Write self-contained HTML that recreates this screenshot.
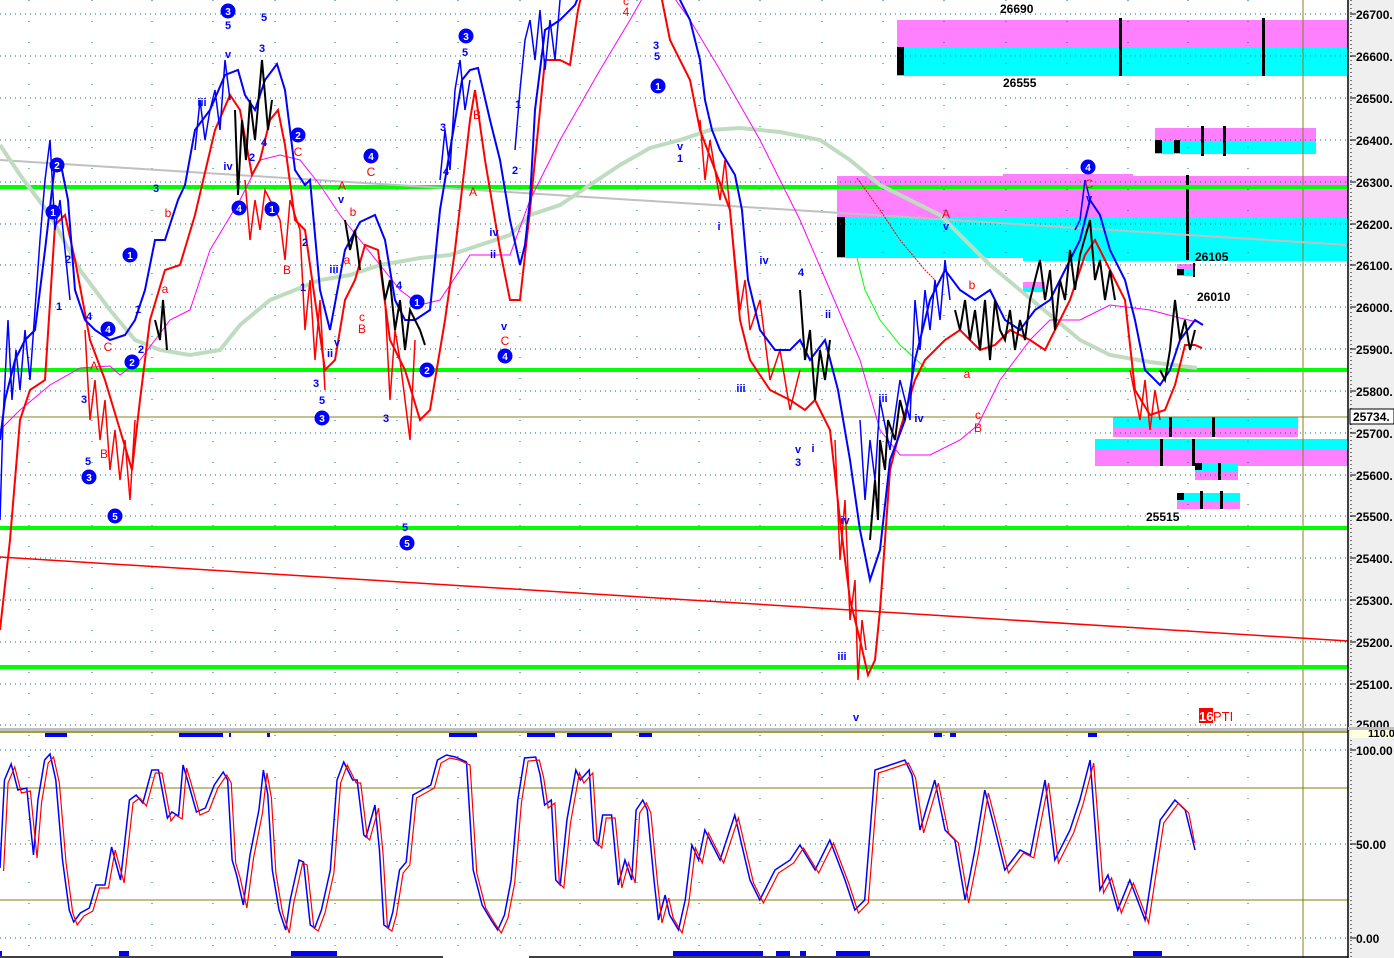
<!DOCTYPE html>
<html><head><meta charset="utf-8"><style>
html,body{margin:0;padding:0;background:#fff;width:1394px;height:958px;overflow:hidden}
svg{display:block}
text{font-family:"Liberation Sans",sans-serif}
</style></head><body>
<svg width="1394" height="958" viewBox="0 0 1394 958" xmlns="http://www.w3.org/2000/svg">
<rect x="0" y="0" width="1394" height="958" fill="#fff"/>
<rect x="1349" y="0" width="45" height="958" fill="#efefef"/>
<!-- boxes -->
<rect x="897" y="20" width="451" height="27" fill="#ff80ff"/><rect x="897" y="47" width="451" height="29" fill="#00ffff"/>
<rect x="897" y="47" width="7" height="28" fill="#000"/>
<rect x="1119" y="18" width="3" height="58" fill="#000"/><rect x="1262" y="18" width="3" height="58" fill="#000"/>
<rect x="1155" y="128" width="161" height="14" fill="#ff80ff"/><rect x="1155" y="142" width="161" height="12" fill="#00ffff"/>
<rect x="1155" y="140" width="7" height="13" fill="#000"/><rect x="1174" y="140" width="6" height="13" fill="#000"/>
<rect x="1201" y="126" width="3" height="30" fill="#000"/><rect x="1223" y="126" width="3" height="30" fill="#000"/>
<rect x="1003" y="174" width="130" height="4" fill="#ff80ff"/>
<rect x="837" y="176" width="511" height="41" fill="#ff80ff"/><rect x="837" y="217" width="511" height="41" fill="#00ffff"/>
<rect x="1023" y="255" width="325" height="6" fill="#00ffff"/>
<rect x="837" y="217" width="8" height="40" fill="#000"/>
<rect x="1186" y="175" width="3" height="85" fill="#000"/>
<rect x="1177" y="264" width="18" height="6" fill="#ff80ff"/><rect x="1177" y="270" width="18" height="6" fill="#00ffff"/><rect x="1177" y="269" width="7" height="6" fill="#000"/><rect x="1193" y="263" width="2" height="14" fill="#000"/>
<rect x="1023" y="282" width="22" height="5" fill="#ff80ff"/><rect x="1023" y="287" width="22" height="5" fill="#00ffff"/>
<rect x="1113" y="417" width="185" height="10" fill="#00ffff"/><rect x="1113" y="427" width="185" height="10" fill="#ff80ff"/>
<rect x="1095" y="439" width="253" height="11" fill="#00ffff"/><rect x="1095" y="450" width="253" height="16" fill="#ff80ff"/>
<rect x="1195" y="463" width="43" height="8" fill="#00ffff"/><rect x="1195" y="471" width="43" height="9" fill="#ff80ff"/><rect x="1195" y="463" width="7" height="7" fill="#000"/>
<rect x="1177" y="493" width="63" height="8" fill="#00ffff"/><rect x="1177" y="501" width="63" height="8" fill="#ff80ff"/><rect x="1177" y="493" width="7" height="7" fill="#000"/>
<g fill="#000"><rect x="1169" y="417" width="3" height="20"/><rect x="1212" y="417" width="3" height="20"/><rect x="1160" y="439" width="3" height="27"/><rect x="1192" y="439" width="3" height="27"/><rect x="1218" y="463" width="3" height="17"/><rect x="1200" y="491" width="3" height="18"/><rect x="1220" y="491" width="3" height="18"/></g>
<!-- grid -->
<g stroke="#007070" stroke-width="1" stroke-dasharray="1,4">
<line x1="0" y1="14" x2="1348" y2="14"/><line x1="0" y1="56" x2="1348" y2="56"/><line x1="0" y1="98" x2="1348" y2="98"/><line x1="0" y1="140" x2="1348" y2="140"/><line x1="0" y1="182" x2="1348" y2="182"/><line x1="0" y1="224" x2="1348" y2="224"/><line x1="0" y1="265" x2="1348" y2="265"/><line x1="0" y1="307" x2="1348" y2="307"/><line x1="0" y1="349" x2="1348" y2="349"/><line x1="0" y1="391" x2="1348" y2="391"/><line x1="0" y1="433" x2="1348" y2="433"/><line x1="0" y1="475" x2="1348" y2="475"/><line x1="0" y1="516" x2="1348" y2="516"/><line x1="0" y1="558" x2="1348" y2="558"/><line x1="0" y1="600" x2="1348" y2="600"/><line x1="0" y1="642" x2="1348" y2="642"/><line x1="0" y1="684" x2="1348" y2="684"/><line x1="0" y1="725" x2="1348" y2="725"/>
<line x1="0" y1="750" x2="1348" y2="750"/><line x1="0" y1="844" x2="1348" y2="844"/><line x1="0" y1="938" x2="1348" y2="938"/>
</g>
<g stroke="#007070" stroke-width="1" stroke-dasharray="1,20">
<line x1="29" y1="0" x2="29" y2="958"/><line x1="92" y1="0" x2="92" y2="958"/><line x1="152" y1="0" x2="152" y2="958"/><line x1="213" y1="0" x2="213" y2="958"/><line x1="275" y1="0" x2="275" y2="958"/><line x1="335" y1="0" x2="335" y2="958"/><line x1="397" y1="0" x2="397" y2="958"/><line x1="458" y1="0" x2="458" y2="958"/><line x1="520" y1="0" x2="520" y2="958"/><line x1="580" y1="0" x2="580" y2="958"/><line x1="637" y1="0" x2="637" y2="958"/><line x1="699" y1="0" x2="699" y2="958"/><line x1="760" y1="0" x2="760" y2="958"/><line x1="822" y1="0" x2="822" y2="958"/><line x1="883" y1="0" x2="883" y2="958"/><line x1="944" y1="0" x2="944" y2="958"/><line x1="1006" y1="0" x2="1006" y2="958"/><line x1="1067" y1="0" x2="1067" y2="958"/><line x1="1128" y1="0" x2="1128" y2="958"/><line x1="1188" y1="0" x2="1188" y2="958"/><line x1="1248" y1="0" x2="1248" y2="958"/>
</g>
<line x1="1303" y1="0" x2="1303" y2="958" stroke="#808020" stroke-width="1"/>
<line x1="0" y1="417" x2="1348" y2="417" stroke="#808020" stroke-width="1"/>
<!-- horizontals -->
<g fill="#00ff00"><rect x="0" y="185" width="1348" height="4"/><rect x="0" y="368" width="1348" height="4"/><rect x="0" y="526" width="1348" height="4"/><rect x="0" y="665" width="1348" height="4"/></g>
<line x1="0" y1="557" x2="1348" y2="641" stroke="#ff0000" stroke-width="1.5"/>
<line x1="0" y1="160" x2="1348" y2="245" stroke="#c0c0c0" stroke-width="2"/>
<!-- MA -->
<polyline fill="none" stroke="#c0dcc0" stroke-width="4" points="0,145 20,175 50,215 80,270 110,310 135,340 160,350 190,355 220,350 240,325 270,300 300,288 320,280 350,275 380,265 420,258 450,255 480,245 510,235 530,215 560,205 590,185 620,165 650,148 680,140 710,130 740,128 780,132 820,140 850,160 880,185 910,200 940,215 960,235 990,265 1020,290 1050,315 1080,340 1110,355 1150,362 1197,368"/>
<polyline fill="none" stroke="#ff00ff" stroke-width="1" points="0,430 20,410 50,385 80,368 110,366 120,375 140,360 170,320 190,310 210,250 240,200 260,160 280,155 300,160 320,185 340,215 360,240 380,265 400,290 420,305 440,300 470,255 510,255 530,200 560,140 600,70 630,20 650,-15 665,-15 690,20 720,70 760,140 800,220 830,290 860,360 880,430 900,455 930,455 960,440 978,425 1000,380 1030,340 1050,320 1080,320 1110,305 1150,310 1180,318 1197,322"/>
<polyline fill="none" stroke="#00ff00" stroke-width="1" points="857,258 865,290 880,320 900,345 930,372"/>
<polyline fill="none" stroke="#ff0000" stroke-width="1" stroke-dasharray="2,1" points="857,178 880,210 900,240 925,270 935,280"/>
<!-- price lines -->
<polyline fill="none" stroke="#ff0000" stroke-width="2" points="0,630 10,540 20,420 30,390 45,380 55,225 65,215 75,260 90,340 105,380 120,430 132,470 140,400 150,320 165,270 180,265 195,215 215,130 230,95 240,110 252,175 260,160 270,120 278,110 285,145 295,220 305,230 315,300 325,370 335,360 345,300 355,280 365,245 378,250 390,340 405,370 420,420 430,410 445,320 455,250 470,120 475,90 485,160 500,250 510,300 520,300 530,210 545,60 560,60 570,65 578,10 585,-20 655,-20 662,0 670,40 690,80 700,130 715,170 730,210 740,320 750,360 770,390 790,400 805,410 815,400 830,430 840,520 850,600 860,640 868,675 875,660 880,610 890,470 900,430 915,380 925,360 945,340 960,330 980,350 995,345 1010,330 1030,340 1045,350 1055,330 1070,300 1085,255 1095,240 1105,260 1115,280 1125,300 1135,390 1150,415 1165,410 1175,385 1185,345 1195,345 1202,348"/>
<g fill="none" stroke="#ff0000" stroke-width="1.5">
<polyline points="85,330 90,420 95,380 100,440 105,400 110,470 115,430 120,480 125,440 130,500 135,420"/>
<polyline points="245,180 250,240 255,200 260,230 265,190 280,220 285,260 290,200 300,230 305,330 310,280 315,360 320,300 325,390"/>
<polyline points="385,300 390,400 395,330 400,360 410,440 415,340"/>
<polyline points="700,120 705,180 710,140 720,200 725,160 735,260 740,310 745,280 750,330 760,300 770,380 780,350 790,410 800,370"/>
<polyline points="835,440 840,560 845,500 850,620 855,580 858,680 862,620 866,650"/>
<polyline points="1130,370 1140,420 1145,380 1150,430 1155,390 1160,420"/>
</g>
<polyline fill="none" stroke="#0000ff" stroke-width="2" points="0,440 5,400 15,360 25,340 35,330 45,250 52,190 55,165 62,170 68,200 75,290 85,320 95,330 110,340 125,335 135,320 145,290 155,240 165,240 178,200 185,185 195,130 210,110 225,75 238,70 245,95 255,110 265,80 277,64 285,90 295,170 305,185 310,180 320,290 330,330 345,250 360,222 375,215 385,240 395,300 405,320 415,320 430,310 440,210 450,150 462,80 470,70 478,68 490,120 500,160 510,220 520,265 525,245 530,200 535,110 545,30 560,20 575,5 585,-20 672,-20 680,0 690,20 700,60 705,100 712,130 720,150 735,175 742,210 748,280 760,330 775,350 790,350 800,340 810,360 825,340 838,390 850,460 860,530 870,580 880,550 890,460 905,420 915,360 930,300 945,270 960,290 975,300 990,290 1005,320 1020,330 1035,310 1050,300 1065,270 1080,240 1090,200 1100,215 1110,250 1125,280 1135,320 1145,370 1160,385 1170,370 1180,340 1195,320 1203,325"/>
<g fill="none" stroke="#0000ff" stroke-width="1.5">
<polyline points="0,520 3,420 8,320 12,400 16,350 20,390 25,330 30,380 40,240 45,180 50,140 55,230 60,200 70,300"/>
<polyline points="195,150 200,100 205,140 210,110 215,90 220,130 225,60 230,100"/>
<polyline points="440,180 445,130 450,170 455,90 460,60 465,110 470,80"/>
<polyline points="515,150 520,90 525,40 530,20 535,60 540,10 545,70 550,20 555,60 560,0"/>
<polyline points="860,420 865,500 870,440 875,480 880,400 890,450 900,380 910,420 915,300 920,350 925,290 930,330 935,280 940,320 945,260 950,300"/>
<polyline points="1075,230 1080,220 1085,180 1090,200"/>
</g>
<g fill="none" stroke="#000" stroke-width="2">
<polyline points="155,320 160,340 163,300 167,350"/>
<polyline points="235,110 238,195 242,120 246,160 250,100 255,140 262,60 268,130 272,100"/>
<polyline points="345,220 350,250 355,230 360,270"/>
<polyline points="380,260 385,300 390,280 395,330 400,300 405,350 410,310 420,330 425,345"/>
<polyline points="800,290 805,360 810,330 815,400 820,350 825,380 830,340"/>
<polyline points="870,540 875,480 878,520 880,440 885,470 888,420 895,440 900,400 905,420"/>
<polyline points="955,310 960,330 965,300 970,340 975,310 980,350 985,300 990,360 995,300 1000,330 1005,340 1010,310 1015,350 1020,320 1025,340 1030,300 1040,260 1045,300 1050,270 1055,330 1060,280 1065,300 1070,250 1075,290 1080,255 1090,220 1095,280 1100,260 1105,300 1110,270 1115,300"/>
<polyline points="1160,370 1165,380 1170,350 1175,300 1180,340 1185,320 1190,350 1195,330"/>
</g>
<!-- wave labels -->
<g fill="#0000ff" font-size="11" font-weight="bold" text-anchor="middle">
<text x="228" y="29">5</text><text x="264" y="21">5</text><text x="262" y="52">3</text><text x="228" y="58">v</text><text x="202" y="106">iii</text><text x="228" y="170">iv</text><text x="156" y="192">3</text><text x="68" y="263">2</text><text x="89" y="320">4</text><text x="59" y="310">1</text><text x="84" y="403">3</text><text x="88" y="465">5</text><text x="138" y="313">1</text><text x="141" y="353">2</text><text x="252" y="161">2</text><text x="264" y="146">4</text><text x="305" y="246">2</text><text x="303" y="291">1</text><text x="341" y="203">v</text><text x="334" y="273">iii</text><text x="337" y="346">v</text><text x="330" y="357">ii</text><text x="316" y="387">3</text><text x="322" y="404">5</text><text x="386" y="422">3</text><text x="405" y="531">5</text><text x="399" y="289">4</text><text x="443" y="131">3</text><text x="446" y="175">4</text><text x="465" y="56">5</text><text x="518" y="108">1</text><text x="515" y="174">2</text><text x="494" y="236">iv</text><text x="493" y="258">ii</text><text x="504" y="330">v</text><text x="656" y="49">3</text><text x="657" y="60">5</text><text x="680" y="150">v</text><text x="680" y="162">1</text><text x="719" y="230">i</text><text x="764" y="264">iv</text><text x="801" y="276">4</text><text x="828" y="318">ii</text><text x="741" y="392">iii</text><text x="798" y="453">v</text><text x="798" y="466">3</text><text x="813" y="452">i</text><text x="845" y="524">iv</text><text x="842" y="660">iii</text><text x="856" y="721">v</text><text x="883" y="402">iii</text><text x="919" y="422">iv</text><text x="946" y="230">v</text><text x="1089" y="202">v</text>
</g>
<g fill="#ff0000" font-size="12" text-anchor="middle">
<text x="108" y="351">C</text><text x="94" y="370">A</text><text x="104" y="458">B</text><text x="168" y="217">b</text><text x="165" y="293">a</text><text x="298" y="156">C</text><text x="287" y="274">B</text><text x="342" y="190">A</text><text x="353" y="216">b</text><text x="347" y="264">a</text><text x="362" y="321">c</text><text x="362" y="333">B</text><text x="371" y="176">C</text><text x="473" y="196">A</text><text x="477" y="119">B</text><text x="505" y="345">C</text><text x="626" y="5">c</text><text x="626" y="16">4</text><text x="946" y="218">A</text><text x="972" y="289">b</text><text x="967" y="378">a</text><text x="978" y="419">c</text><text x="978" y="432">B</text><text x="1089" y="188">C</text>
</g>
<g font-size="10" font-weight="bold" fill="#fff" text-anchor="middle">
<circle cx="228" cy="11" r="7.5" fill="#0000ff"/><text x="228" y="15">3</text>
<circle cx="89" cy="477" r="7.5" fill="#0000ff"/><text x="89" y="481">3</text>
<circle cx="322" cy="418" r="7.5" fill="#0000ff"/><text x="322" y="422">3</text>
<circle cx="466" cy="36" r="7.5" fill="#0000ff"/><text x="466" y="40">3</text>
<circle cx="57" cy="165" r="7.5" fill="#0000ff"/><text x="57" y="169">2</text>
<circle cx="298" cy="135" r="7.5" fill="#0000ff"/><text x="298" y="139">2</text>
<circle cx="132" cy="362" r="7.5" fill="#0000ff"/><text x="132" y="366">2</text>
<circle cx="427" cy="370" r="7.5" fill="#0000ff"/><text x="427" y="374">2</text>
<circle cx="53" cy="212" r="7.5" fill="#0000ff"/><text x="53" y="216">1</text>
<circle cx="130" cy="255" r="7.5" fill="#0000ff"/><text x="130" y="259">1</text>
<circle cx="272" cy="209" r="7.5" fill="#0000ff"/><text x="272" y="213">1</text>
<circle cx="417" cy="302" r="7.5" fill="#0000ff"/><text x="417" y="306">1</text>
<circle cx="658" cy="86" r="7.5" fill="#0000ff"/><text x="658" y="90">1</text>
<circle cx="108" cy="329" r="7.5" fill="#0000ff"/><text x="108" y="333">4</text>
<circle cx="239" cy="208" r="7.5" fill="#0000ff"/><text x="239" y="212">4</text>
<circle cx="371" cy="156" r="7.5" fill="#0000ff"/><text x="371" y="160">4</text>
<circle cx="505" cy="356" r="7.5" fill="#0000ff"/><text x="505" y="360">4</text>
<circle cx="1088" cy="167" r="7.5" fill="#0000ff"/><text x="1088" y="171">4</text>
<circle cx="115" cy="516" r="7.5" fill="#0000ff"/><text x="115" y="520">5</text>
<circle cx="407" cy="543" r="7.5" fill="#0000ff"/><text x="407" y="547">5</text>
</g>
<g font-size="12" font-weight="bold" fill="#000">
<text x="1000" y="13">26690</text><text x="1003" y="87">26555</text><text x="1195" y="261">26105</text><text x="1197" y="301">26010</text><text x="1146" y="521">25515</text>
</g>
<rect x="1199" y="708" width="14" height="15" fill="#ff0000"/>
<text x="1199" y="721" font-size="13" font-weight="bold" fill="#fff">16</text>
<text x="1213" y="721" font-size="13" fill="#ff0000">PTI</text>
<!-- separator -->
<rect x="0" y="728" width="1394" height="3" fill="#c0c0c0"/>
<line x1="0" y1="732" x2="1348" y2="732" stroke="#808000" stroke-width="1.5"/>
<line x1="0" y1="788" x2="1348" y2="788" stroke="#808000" stroke-width="1"/>
<line x1="0" y1="900" x2="1348" y2="900" stroke="#808000" stroke-width="1"/>
<g fill="#0000ff"><rect x="45" y="733" width="22" height="4"/><rect x="179" y="733" width="44" height="4"/><rect x="229" y="733" width="2" height="4"/><rect x="267" y="733" width="3" height="4"/><rect x="449" y="733" width="28" height="4"/><rect x="527" y="733" width="28" height="4"/><rect x="567" y="733" width="45" height="4"/><rect x="639" y="733" width="13" height="4"/><rect x="934" y="733" width="8" height="4"/><rect x="950" y="733" width="6" height="4"/><rect x="1088" y="733" width="9" height="4"/>
<rect x="0" y="951" width="2" height="5"/><rect x="119" y="951" width="10" height="5"/><rect x="291" y="951" width="46" height="5"/><rect x="673" y="951" width="90" height="5"/><rect x="776" y="951" width="14" height="5"/><rect x="800" y="951" width="6" height="5"/><rect x="836" y="951" width="34" height="5"/><rect x="1133" y="951" width="29" height="5"/></g>
<line x1="0" y1="957" x2="443" y2="957" stroke="#000" stroke-width="1.5"/><line x1="529" y1="957" x2="1348" y2="957" stroke="#000" stroke-width="1.5"/>
<!-- oscillator -->
<g transform="scale(0.4464,1)">
<polyline fill="none" stroke="#0000ff" stroke-width="1.5" vector-effect="non-scaling-stroke" points="0,868 10,780 25,764 40,790 60,788 75,855 85,800 100,760 112,754 125,780 140,860 155,910 165,922 180,913 200,908 215,885 235,885 250,847 270,880 290,800 305,795 320,803 340,770 355,770 375,818 385,812 400,816 410,765 420,780 440,812 460,808 480,785 500,772 510,780 520,860 530,875 545,905 560,855 580,810 590,770 600,795 610,870 625,910 640,930 650,900 670,860 680,862 695,925 705,928 720,910 740,870 755,780 770,762 790,780 800,780 815,835 820,837 840,805 850,850 860,925 870,928 880,912 895,870 910,862 925,795 945,790 965,785 980,760 1000,755 1020,757 1045,762 1060,870 1080,905 1100,920 1115,930 1130,915 1145,880 1160,800 1175,758 1200,757 1210,775 1220,805 1235,800 1245,880 1255,885 1270,820 1290,770 1300,780 1320,770 1330,840 1340,845 1350,815 1370,815 1385,885 1400,860 1415,880 1425,810 1440,800 1450,810 1465,880 1475,920 1490,895 1500,915 1520,930 1535,900 1550,845 1565,860 1579,830 1613,860 1646,815 1680,880 1702,900 1736,870 1770,860 1792,845 1826,870 1859,840 1893,880 1915,910 1937,900 1960,770 1994,765 2027,760 2043,775 2061,830 2094,780 2117,830 2139,840 2162,900 2184,850 2206,790 2229,830 2251,870 2285,850 2308,855 2341,780 2363,860 2397,830 2419,800 2442,760 2464,890 2482,875 2504,910 2531,880 2565,920 2599,820 2632,800 2655,810 2677,850"/>
<polyline fill="none" stroke="#ff0000" stroke-width="1.2" vector-effect="non-scaling-stroke" transform="translate(8,3)" points="0,868 10,780 25,764 40,790 60,788 75,855 85,800 100,760 112,754 125,780 140,860 155,910 165,922 180,913 200,908 215,885 235,885 250,847 270,880 290,800 305,795 320,803 340,770 355,770 375,818 385,812 400,816 410,765 420,780 440,812 460,808 480,785 500,772 510,780 520,860 530,875 545,905 560,855 580,810 590,770 600,795 610,870 625,910 640,930 650,900 670,860 680,862 695,925 705,928 720,910 740,870 755,780 770,762 790,780 800,780 815,835 820,837 840,805 850,850 860,925 870,928 880,912 895,870 910,862 925,795 945,790 965,785 980,760 1000,755 1020,757 1045,762 1060,870 1080,905 1100,920 1115,930 1130,915 1145,880 1160,800 1175,758 1200,757 1210,775 1220,805 1235,800 1245,880 1255,885 1270,820 1290,770 1300,780 1320,770 1330,840 1340,845 1350,815 1370,815 1385,885 1400,860 1415,880 1425,810 1440,800 1450,810 1465,880 1475,920 1490,895 1500,915 1520,930 1535,900 1550,845 1565,860 1579,830 1613,860 1646,815 1680,880 1702,900 1736,870 1770,860 1792,845 1826,870 1859,840 1893,880 1915,910 1937,900 1960,770 1994,765 2027,760 2043,775 2061,830 2094,780 2117,830 2139,840 2162,900 2184,850 2206,790 2229,830 2251,870 2285,850 2308,855 2341,780 2363,860 2397,830 2419,800 2442,760 2464,890 2482,875 2504,910 2531,880 2565,920 2599,820 2632,800 2655,810 2668,840"/>
</g>
<!-- axis -->
<line x1="1348" y1="0" x2="1348" y2="958" stroke="#000" stroke-width="1.5"/>
<line x1="1351" y1="0" x2="1351" y2="958" stroke="#000" stroke-width="1" stroke-dasharray="1,3"/>
<g stroke="#000" stroke-width="1">
<line x1="1350" y1="14" x2="1356" y2="14"/><line x1="1350" y1="56" x2="1356" y2="56"/><line x1="1350" y1="98" x2="1356" y2="98"/><line x1="1350" y1="140" x2="1356" y2="140"/><line x1="1350" y1="182" x2="1356" y2="182"/><line x1="1350" y1="224" x2="1356" y2="224"/><line x1="1350" y1="265" x2="1356" y2="265"/><line x1="1350" y1="307" x2="1356" y2="307"/><line x1="1350" y1="349" x2="1356" y2="349"/><line x1="1350" y1="391" x2="1356" y2="391"/><line x1="1350" y1="433" x2="1356" y2="433"/><line x1="1350" y1="475" x2="1356" y2="475"/><line x1="1350" y1="516" x2="1356" y2="516"/><line x1="1350" y1="558" x2="1356" y2="558"/><line x1="1350" y1="600" x2="1356" y2="600"/><line x1="1350" y1="642" x2="1356" y2="642"/><line x1="1350" y1="684" x2="1356" y2="684"/><line x1="1350" y1="750" x2="1356" y2="750"/><line x1="1350" y1="844" x2="1356" y2="844"/><line x1="1350" y1="938" x2="1356" y2="938"/>
</g>
<g font-size="12" font-weight="bold" fill="#000">
<text x="1356" y="19">26700.</text><text x="1356" y="61">26600.</text><text x="1356" y="103">26500.</text><text x="1356" y="145">26400.</text><text x="1356" y="187">26300.</text><text x="1356" y="229">26200.</text><text x="1356" y="270">26100.</text><text x="1356" y="312">26000.</text><text x="1356" y="354">25900.</text><text x="1356" y="396">25800.</text><text x="1356" y="438">25700.</text><text x="1356" y="480">25600.</text><text x="1356" y="521">25500.</text><text x="1356" y="563">25400.</text><text x="1356" y="605">25300.</text><text x="1356" y="647">25200.</text><text x="1356" y="689">25100.</text><text x="1356" y="729">25000.</text>
<text x="1356" y="755">100.00</text><text x="1356" y="849">50.00</text><text x="1356" y="943">0.00</text>
</g>
<rect x="1350" y="409" width="44" height="15" fill="#fff" stroke="#000" stroke-width="1"/>
<text x="1353" y="421" font-size="12" font-weight="bold" fill="#000">25734.</text>
<rect x="1350" y="728" width="44" height="10" fill="#ffffe0"/>
<text x="1368" y="737" font-size="11" font-weight="bold" fill="#000">110.0</text>
<rect x="1348" y="727" width="46" height="3" fill="#c0c0c0"/>
</svg>
</body></html>
